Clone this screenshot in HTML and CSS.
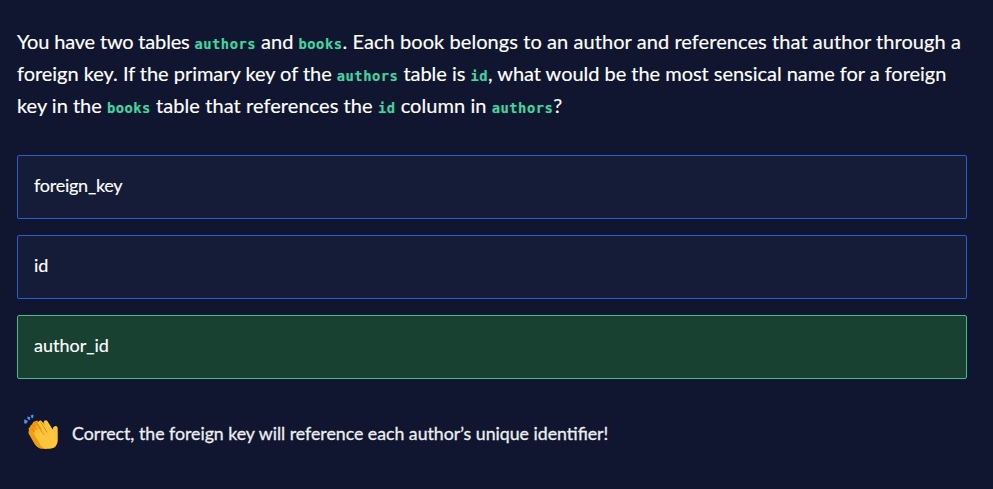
FILE: index.html
```html
<!DOCTYPE html>
<html lang="en">
<head>
<meta charset="utf-8">
<title>Quiz</title>
<link rel="stylesheet" href="styles.css">
</head>
<body>
<main class="quiz">
  <p class="question">
    <span class="line"><span class="tight">You have two tables </span><code>authors</code> and <code>books</code><span class="loose">. Each book belongs to an author and references that author through a</span></span>
    <span class="line"><span class="snug">foreign key. If the primary key of the </span><code>authors</code><span class="snug"> table is </span><code>id</code><span class="snug">, what would be the most sensical name for a foreign</span></span>
    <span class="line">key in the <code>books</code><span class="wide"> table that references the </span><code>id</code><span class="wide"> column in </span><code>authors</code>?</span>
  </p>
  <div class="choices">
    <div class="choice"><span class="narrow">foreign_key</span></div>
    <div class="choice"><span>id</span></div>
    <div class="choice correct"><span>author_id</span></div>
  </div>
  <div class="feedback">
    <svg class="clap" viewBox="0 0 36 36" aria-hidden="true">
      <path class="spark" d="M1.300 5.300 5 7 3.200 9.800 1.200 9.300ZM4.300 2.500 7.300 3.300 6.800 6.300 4.500 5ZM7.500 1.500 10.400 .500V3L9 4.800Z"/>
      <path class="back" d="M6 16.200Q4.800 13.600 7 13.200Q7.200 10.800 9.200 10.300Q9.500 7.800 12 7.300L14 6.500L26 17 24 34.700H18Q13.500 33.500 11.300 29.500L5.600 19.500Q5.200 17.500 6 16.200Z"/>
      <path class="front" d="M11.200 18Q12 14.800 14 16.400L17.600 20.200 12.400 13.400Q13 10.600 15.300 12L20.500 18.300 15.200 10Q14.800 6.200 18 6.500L22 11 20.400 8.500Q21.300 5.300 24 6.500L29.700 15.500 30.400 13Q34 10.500 34.700 14V27Q34 34.200 27 34.700H21.500Q17.500 32.700 15.800 28.200L11 20Z"/>
      <path class="crease" d="M9 11.500Q12 10.600 14.500 15M12 8.200Q14.500 8.500 18 15M7 14.300Q9.500 13.500 12 18M17.800 8.500 24 18M14.500 12 20.800 20.500"/>
    </svg>
    <span class="message">Correct, the foreign key will reference each author’s unique identifier!</span>
  </div>
</main>
</body>
</html>
```
FILE: styles.css
```css
body {
  margin: 0;
  background: #10162f;
  color: #fff;
  font-family: Lato, "Liberation Sans", sans-serif;
}

.quiz {
  width: 950px;
  padding: 25px 0 0 17px;
}

.question {
  margin: 0 0 34px;
  font-size: 20px;
  line-height: 32px;
  -webkit-text-stroke: 0.15px;
}

.line {
  display: block;
  white-space: nowrap;
}

.tight { letter-spacing: -0.18px; }
.snug { letter-spacing: -0.03px; }
.loose { letter-spacing: 0.07px; }
.wide { letter-spacing: 0.07px; }
.narrow { letter-spacing: -0.25px; }

code {
  font: bold 13.800px/1 "DejaVu Sans Mono", monospace;
  letter-spacing: 0.480px;
  color: #40d6a0;
}

.choices {
  display: grid;
  gap: 16px;
}

.choice {
  box-sizing: border-box;
  height: 64px;
  padding: 0 16px 4px;
  display: flex;
  align-items: center;
  border: 1px solid #2b5bd0;
  border-radius: 2px;
  background: #151c38;
  font-size: 18px;
  line-height: 24px;
  -webkit-text-stroke: 0.15px;
}

.correct {
  border-color: #3bbd8c;
  background: #184132;
}

.feedback {
  display: flex;
  align-items: center;
  margin-top: 34px;
  padding-left: 6px;
  gap: 13px;
  height: 38px;
  font-size: 17.720px;
  color: #eeeef1;
  -webkit-text-stroke: 0.3px;
}

.message {
  padding-top: 2px;
}

.clap {
  width: 36px;
  height: 36px;
  -webkit-text-stroke: 0;
}

.spark { fill: #4499ee; }
.back { fill: #f79c08; }
.front { fill: #ffc63b; }
.crease { fill: none; stroke: #e88b10; stroke-width: 1; stroke-linecap: round; }
```
